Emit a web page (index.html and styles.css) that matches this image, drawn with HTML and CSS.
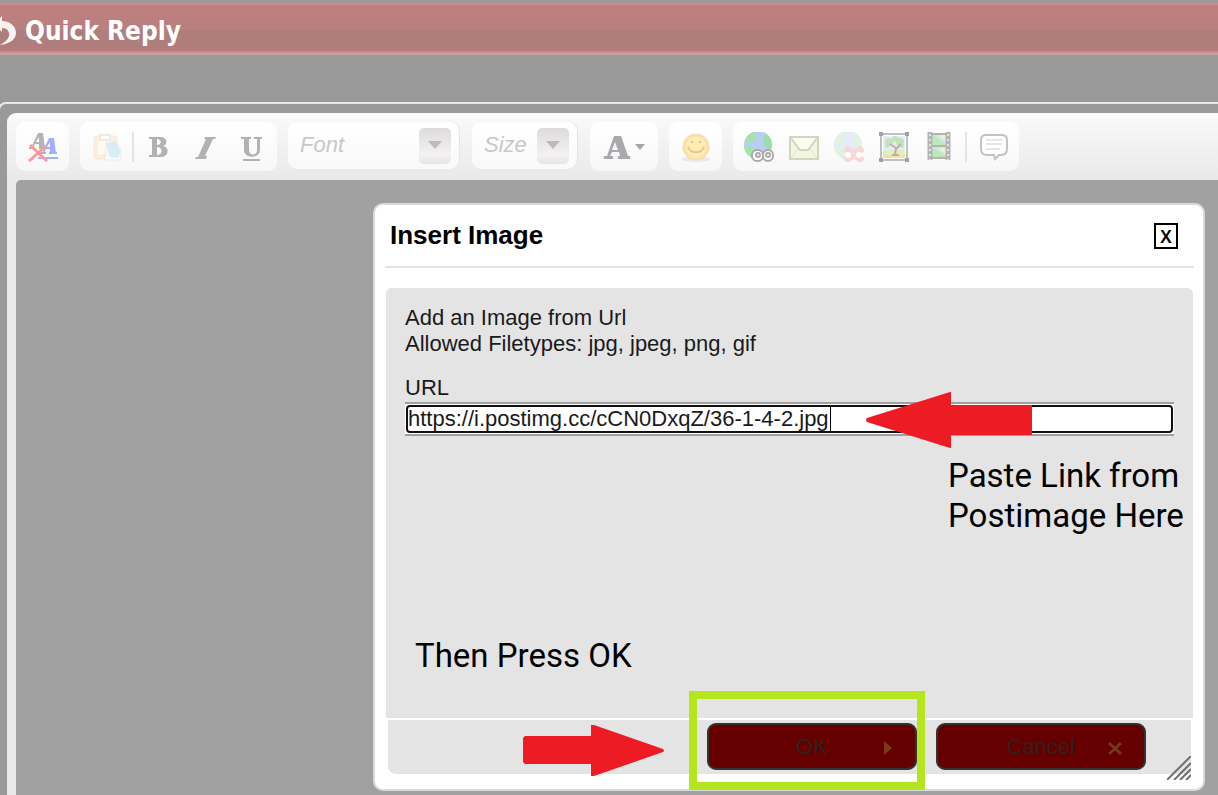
FILE: index.html
```
<!DOCTYPE html>
<html lang="en">
<head>
    <meta charset="UTF-8">
    <meta name="viewport" content="width=device-width, initial-scale=1.0">
    <title>Quick Reply</title>
    <link rel="stylesheet" href="styles.css">
</head>
<body>
    <header class="reply-header">
        <svg class="reply-icon" width="17" height="30" viewBox="0 0 17 30">
            <path d="M0 2 L2 0 V5 C10 5 16 10 16 17 C16 23 10 28 0 29 C7 25 10 21 9 17 C8 13 5 12 2 12 V16 L0 14 Z" fill="#fff" opacity=".9"/>
        </svg>
        <h1>Quick Reply</h1>
    </header>

    <main class="editor-frame">
        <div class="editor">
            <div class="toolbar">
                <div class="group">
                    <button class="tool" aria-label="Remove Format">
                        <svg width="30" height="30" viewBox="0 0 30 30">
                            <g fill="#b4b4b4">
                                <path d="M10 1 H15 L17 17 H11 L11 12 H7 L5 16 H3 Z M11 5 L8 10 H11 Z"/>
                                <path d="M1 15 H7 V17 H1 Z"/>
                            </g>
                            <g fill="#a3aeff">
                                <path d="M21 6 H26 L28 22 H22 L22 17 H18 L16 21 H14 Z M22 10 L19 15 H22 Z"/>
                                <path d="M12 20 H18 V22 H12 Z M21 20 H29 V22 H21 Z M10 25 H30 V27 H10 Z"/>
                            </g>
                            <path d="M2 13 L19 29 M18 14 L1 29" stroke="#ff9a9a" stroke-width="3"/>
                        </svg>
                    </button>
                </div>

                <div class="group">
                    <button class="tool" aria-label="Paste">
                        <svg width="30" height="30" viewBox="0 0 30 30">
                            <rect x="2" y="4" width="23" height="23" rx="3" fill="#fdeedd" stroke="#f8e6d2"/>
                            <path d="M6 9 H19 V22 H6 Z" fill="#fffaf2"/>
                            <path d="M8 3 H18 V8 H8 Z" fill="#fff" stroke="#f1e8de" stroke-width="2"/>
                            <path d="M14 14 L26 13 L29 17 V28 H13 Z" fill="#fafafa" stroke="#ececec"/>
                            <path d="M13 11 L24 9 L29 20 L26 26 L18 25 Z" fill="#d8eef7"/>
                        </svg>
                    </button>
                    <span class="separator"></span>
                    <button class="tool" aria-label="Bold">
                        <svg width="24" height="30" viewBox="0 0 24 30">
                            <path d="M2 5 H13 C21 5 21 13 16 14 C23 15 22 25 14 25 H2 V23 H5 V7 H2 Z M10 7 V13 C15 13 15 7 10 7 Z M10 15 V23 C16 23 16 15 10 15 Z" fill="#b2b2b4" fill-rule="evenodd"/>
                        </svg>
                    </button>
                    <button class="tool" aria-label="Italic">
                        <svg width="24" height="30" viewBox="0 0 24 30">
                            <path d="M12 5 H23 L22 7 H20 L12 24 H14 L13 27 H2 L3 25 H5 L13 7 H11 Z" fill="#b2b2b4"/>
                        </svg>
                    </button>
                    <button class="tool" aria-label="Underline">
                        <svg width="24" height="30" viewBox="0 0 24 30">
                            <path d="M2 5 H12 V7 H10 V18 C10 24 18 24 18 18 V7 H15 V5 H23 V7 H21 V18 C21 27 5 27 5 18 V7 H2 Z M4 27 H21 V29 H4 Z" fill="#b2b2b4"/>
                        </svg>
                    </button>
                </div>

                <div class="combo combo-font">
                    <select aria-label="Font">
                        <option>Font</option>
                    </select>
                    <span class="combo-arrow"></span>
                </div>

                <div class="combo combo-size">
                    <select aria-label="Size">
                        <option>Size</option>
                    </select>
                    <span class="combo-arrow"></span>
                </div>

                <div class="group">
                    <button class="tool tool-color" aria-label="Text Color">
                        <svg width="42" height="30" viewBox="0 0 42 30">
                            <path d="M10 4 H17 L24 24 H26 V27 H14 V24 H16 L15 20 H8 L6 24 H9 V27 H0 V24 H3 Z M11 10 L8 18 H14 Z" fill="#a9a9ad" fill-rule="evenodd"/>
                            <path d="M31 12 H41 L36 18 Z" fill="#a6a6a6"/>
                        </svg>
                    </button>
                </div>

                <div class="group">
                    <button class="tool" aria-label="Smiley">
                        <svg width="30" height="30" viewBox="0 0 30 30">
                            <ellipse cx="15" cy="27" rx="14" ry="3" fill="#e9e9e9"/>
                            <circle cx="15" cy="15" r="12" fill="#fcecb4" stroke="#f9dfae" stroke-width="3"/>
                            <circle cx="11" cy="10" r="1" fill="#dcb58a"/>
                            <circle cx="19" cy="10" r="1" fill="#dcb58a"/>
                            <path d="M7 15 C10 22 20 22 23 15" fill="none" stroke="#e6ca95" stroke-width="2"/>
                        </svg>
                    </button>
                </div>

                <div class="group group-media">
                    <button class="tool" aria-label="Link">
                        <svg width="30" height="30" viewBox="0 0 30 30">
                            <circle cx="14" cy="13" r="14" fill="#b9cdf7"/>
                            <path d="M2 6 C6 0 11 0 14 0 L11 5 L13 8 L7 11 L2 10 Z" fill="#a6e2b0"/>
                            <path d="M21 1 C27 5 29 11 27 18 L20 14 L19 7 Z" fill="#9fdcaa"/>
                            <path d="M0 14 L7 14 L13 19 L8 26 C3 23 0 19 0 14 Z" fill="#a6e2b0"/>
                            <g fill="#fff" stroke="#aaa" stroke-width="2">
                                <rect x="8" y="18" width="11" height="11" rx="5"/>
                                <rect x="19" y="18" width="10" height="11" rx="5"/>
                                <circle cx="14" cy="23" r="2"/>
                                <circle cx="24" cy="23" r="2"/>
                            </g>
                        </svg>
                    </button>
                    <button class="tool" aria-label="Email">
                        <svg width="30" height="30" viewBox="0 0 30 30">
                            <rect x="1" y="5" width="28" height="22" fill="#f3f5e1" stroke="#d2d6c0" stroke-width="2"/>
                            <path d="M2 6 L11 18 H19 L28 6" fill="#fbfcef" stroke="#d2d6c0" stroke-width="2"/>
                            <path d="M2 26 L9 17 M28 26 L21 17" stroke="#dde0cc"/>
                        </svg>
                    </button>
                    <button class="tool" aria-label="Remove Link">
                        <svg width="30" height="30" viewBox="0 0 30 30">
                            <circle cx="14" cy="13" r="14" fill="#e4ecfa"/>
                            <path d="M2 6 C6 0 11 0 14 0 L11 5 L13 8 L7 11 L2 10 Z" fill="#dff3e2"/>
                            <path d="M21 1 C27 5 29 11 27 18 L20 14 L19 7 Z" fill="#dff3e2"/>
                            <path d="M0 14 L7 14 L13 19 L8 26 C3 23 0 19 0 14 Z" fill="#dff3e2"/>
                            <path d="M11 16 L29 29 M29 16 L11 29" stroke="#fcd6d6" stroke-width="7"/>
                            <circle cx="14" cy="23" r="3" fill="#fff"/>
                            <circle cx="25" cy="23" r="3" fill="#fff"/>
                        </svg>
                    </button>
                    <button class="tool" aria-label="Insert Image">
                        <svg width="30" height="30" viewBox="0 0 30 30">
                            <rect x="2" y="2" width="26" height="26" fill="#fff" stroke="#c0c0c0" stroke-width="2"/>
                            <rect x="4" y="4" width="22" height="14" fill="#e0eefb"/>
                            <path d="M4 18 H26 V23 H4 Z" fill="#dff0c0"/>
                            <path d="M4 23 H26 V26 H4 Z" fill="#f6dfa4"/>
                            <g fill="#c6e3b8">
                                <circle cx="10" cy="10" r="4"/>
                                <circle cx="16" cy="7" r="3"/>
                                <circle cx="21" cy="10" r="4"/>
                                <circle cx="8" cy="14" r="2"/>
                                <circle cx="23" cy="14" r="2"/>
                            </g>
                            <path d="M16 23 L17 16 L11 12 M17 17 L22 12 M13 23 H20" fill="none" stroke="#c4aea4" stroke-width="2"/>
                            <path d="M0 0 H4 V4 H0 Z M26 0 H30 V4 H26 Z M0 26 H4 V30 H0 Z M26 26 H30 V30 H26 Z" fill="#a0a0a0"/>
                        </svg>
                    </button>
                    <button class="tool" aria-label="Insert Video">
                        <svg width="24" height="30" viewBox="0 0 24 30">
                            <rect x="1" y="1" width="22" height="26" fill="#c0eafa"/>
                            <path d="M5 3 C10 4 13 10 19 12 V13 H5 Z M5 16 C11 17 13 22 19 24 V26 H5 Z" fill="#bce9b5"/>
                            <path d="M12 3 H19 V8 C16 8 13 6 12 3 Z M12 16 H19 V21 C16 21 13 19 12 16 Z" fill="#f6efb2"/>
                            <path d="M5 2 H19 M5 14 H19 M5 26 H19" stroke="#b4b4b4" stroke-width="2"/>
                            <path d="M3 0 V28 M21 0 V28" stroke="#b4b4b4" stroke-width="5"/>
                            <path d="M3 2 V28 M21 2 V28" stroke="#e4e4e4" stroke-width="2" stroke-dasharray="2 3"/>
                        </svg>
                    </button>
                    <span class="separator"></span>
                    <button class="tool" aria-label="Quote">
                        <svg width="30" height="30" viewBox="0 0 30 30">
                            <path d="M7 3 H23 Q28 3 28 8 V17 Q28 23 22 23 H20 L16 27 L15 23 H8 Q2 23 2 17 V8 Q2 3 7 3 Z" fill="#fff" stroke="#c2c2c2" stroke-width="2"/>
                            <path d="M7 8 H23 M7 12 H23 M7 17 H21" stroke="#e6e6e6" stroke-width="2"/>
                        </svg>
                    </button>
                </div>
            </div>
            <div class="editor-body"></div>
        </div>
    </main>

    <section class="dialog" role="dialog" aria-labelledby="dialogTitle">
        <div class="dialog-title">
            <h2 id="dialogTitle">Insert Image</h2>
            <button class="close-button">X</button>
        </div>
        <div class="dialog-body">
            <p>Add an Image from Url<br>Allowed Filetypes: jpg, jpeg, png, gif</p>
            <label for="urlInput">URL</label>
            <div class="url-field">
                <input type="text" id="urlInput" value="https://i.postimg.cc/cCN0DxqZ/36-1-4-2.jpg">
                <span class="caret"></span>
            </div>
        </div>
        <div class="dialog-footer">
            <button class="action">OK
                <svg width="10" height="16" viewBox="0 0 10 16"><path d="M1 1 L9 8 L1 15 Z" fill="#7a3a1c"/></svg>
            </button>
            <button class="action">Cancel
                <svg width="14" height="16" viewBox="0 0 14 16"><path d="M1 3 L13 14 M13 3 L1 14" stroke="#6f3a1e" stroke-width="3"/></svg>
            </button>
        </div>
        <svg class="resizer" width="24" height="24" viewBox="0 0 24 24">
            <path d="M0 24 L24 0 M7 24 L24 7 M13 24 L24 13 M19 24 L24 19" stroke="#707070" stroke-width="2"/>
        </svg>

        <!-- Instructions drawn over the dialog -->
        <svg class="arrow arrow-url" width="166" height="56" viewBox="0 0 166 56">
            <path d="M1 26 L84 0 H85 V13 H166 V43 H85 V56 H84 L1 30 Q-1 28 1 26 Z" fill="#ed1c24"/>
        </svg>
        <p class="note note-url">Paste Link from<br>Postimage Here</p>
        <p class="note note-ok">Then Press OK</p>
        <svg class="arrow arrow-ok" width="141" height="51" viewBox="0 0 141 51">
            <path d="M2 11 H68 V0 H71 L140 24 Q142 26 140 27 L71 51 H68 V39 H2 L0 37 V13 Z" fill="#ed1c24"/>
        </svg>
        <div class="highlight"></div>
    </section>
</body>
</html>
```
FILE: styles.css
```
* {
    box-sizing: border-box;
}
body {
    font-family: 'Liberation Sans', Arial, sans-serif;
    font-size: 22px;
    line-height: 26px;
    background-color: #999;
    color: #1a1a1a;
    margin: 0;
    padding-top: 3px;
    display: flex;
    flex-direction: column;
    height: 100vh;
    overflow: hidden;
    position: relative;
}
h1, h2, p {
    margin: 0;
}
button, input, select {
    font: inherit;
    color: inherit;
}

/* Quick reply bar */
.reply-header {
    display: flex;
    align-items: center;
    gap: 8px;
    height: 50px;
    padding-top: 5px;
    flex-shrink: 0;
    background: linear-gradient(#bd7f7e, #b8807f 54%, #af7d7c 55%, #b07d7c);
    border-top: 2px solid #da8586;
    border-bottom: 2px solid #da8586;
    box-shadow: 0 2px 0 #b3abab;
}
.reply-header h1 {
    font-family: 'DejaVu Sans Condensed', 'Noto Sans', sans-serif;
    font-size: 26px;
    font-weight: bold;
    line-height: 30px;
    color: #fff;
}

/* Editor */
.editor-frame {
    flex: 1;
    display: flex;
    margin: 49px 0 0 -2px;
    padding: 9px 0 0 7px;
    border: 2px solid #e8e8e8;
    border-width: 2px 0 0 2px;
    border-radius: 8px 0 0 0;
}
.editor {
    flex: 1;
    display: flex;
    flex-direction: column;
    padding-left: 9px;
    border-radius: 9px 0 0 0;
    background: linear-gradient(#fafafa, #e9e9e9 67px);
}
.toolbar {
    display: flex;
    align-items: flex-start;
    gap: 11px;
    padding: 9px 0;
}
.editor-body {
    flex: 1;
    background-color: #a1a1a1;
    border-radius: 5px 0 0 0;
}
.group {
    display: flex;
    align-items: center;
    height: 49px;
    padding: 0 3px 0 4px;
    border-radius: 9px;
    background: linear-gradient(#fff, #f7f7f7);
}
.tool {
    display: flex;
    align-items: center;
    justify-content: center;
    width: 46px;
    height: 46px;
    padding: 0;
    border: none;
    background: none;
    cursor: pointer;
}
.tool-color {
    width: 61px;
}
.group-media {
    padding: 0 3px;
}
.group-media .tool {
    width: 45px;
}
.separator {
    width: 2px;
    height: 30px;
    margin: 0 2px;
    background-color: #e4e4e4;
}
.group-media .separator {
    margin: 0 4px;
}
.combo {
    position: relative;
    height: 47px;
    margin-right: 2px;
    border-radius: 9px;
    background: linear-gradient(#fff, #f9f9f9);
    box-shadow: 1px 0 1px #e2e2e2;
}
.combo-font {
    width: 171px;
}
.combo-size {
    width: 105px;
}
.combo select {
    appearance: none;
    width: 100%;
    height: 46px;
    padding: 0 12px;
    border: none;
    background: none;
    font-style: italic;
    color: #c8c8c8;
}
.combo-arrow {
    position: absolute;
    top: 6px;
    right: 8px;
    width: 32px;
    height: 36px;
    border-radius: 5px;
    background: linear-gradient(#dedbdb, #f3f1f1 75%, #e6e4e4);
    pointer-events: none;
}
.combo-arrow::after {
    content: "";
    position: absolute;
    top: 13px;
    left: 9px;
    border: 7px solid transparent;
    border-top: 8px solid #bcbaba;
    border-bottom: none;
}

/* Insert image dialog */
.dialog {
    position: absolute;
    top: 203px;
    left: 373px;
    right: 13px;
    padding-bottom: 15px;
    background-color: #fff;
    border: 2px solid #dadada;
    border-radius: 10px;
}
.dialog-title {
    display: flex;
    justify-content: space-between;
    align-items: center;
    margin: 0 9px 20px 10px;
    padding: 0 16px 0 5px;
    height: 63px;
    border-bottom: 2px solid #e4e4e4;
}
.dialog-title h2 {
    font-size: 26px;
    line-height: 28px;
    padding-bottom: 2px;
    color: #000;
}
.close-button {
    width: 24px;
    height: 26px;
    padding: 0;
    border: 2px solid #000;
    background: #fff;
    font-family: 'Noto Sans', sans-serif;
    font-size: 18px;
    font-weight: 600;
    line-height: 20px;
    color: #000;
}
.dialog-body {
    min-height: 430px;
    margin: 0 10px 2px 11px;
    padding: 17px 19px;
    background-color: #e4e4e4;
    border-radius: 6px 6px 0 0;
}
.dialog-body label {
    display: block;
    margin: 18px 0 1px;
}
.url-field {
    position: relative;
    padding: 1px;
    background-color: #fff;
    border: 2px solid #a0a0a0;
    border-width: 2px 0;
}
.url-field input {
    display: block;
    width: 100%;
    height: 28px;
    padding: 0;
    border: 2px solid #101010;
    border-radius: 4px;
    background: #fff;
    outline: none;
}
.caret {
    position: absolute;
    top: 3px;
    left: 425px;
    width: 1px;
    height: 24px;
    background-color: #000;
}
.dialog-footer {
    display: flex;
    justify-content: flex-end;
    gap: 19px;
    margin: 0 12px 0 13px;
    padding: 3px 45px 4px 0;
    background-color: #e4e4e4;
    border-radius: 0 0 0 8px;
}
.action {
    position: relative;
    width: 210px;
    height: 47px;
    border: 2px solid #333;
    border-radius: 9px;
    background-color: #600;
    color: #2c2222;
    cursor: pointer;
}
.action svg {
    position: absolute;
    top: 15px;
    right: 22px;
}
.resizer {
    position: absolute;
    right: 12px;
    bottom: 9px;
}

/* Instructions */
.arrow, .note, .highlight {
    position: absolute;
    pointer-events: none;
}
.note {
    font-family: Roboto, sans-serif;
    font-size: 33px;
    line-height: 40px;
    color: #000;
    white-space: nowrap;
}
.arrow-url {
    top: 187px;
    left: 491px;
}
.note-url {
    top: 251px;
    left: 573px;
}
.note-ok {
    top: 431px;
    left: 40px;
}
.arrow-ok {
    top: 520px;
    left: 148px;
}
.highlight {
    top: 486px;
    left: 314px;
    width: 236px;
    height: 99px;
    border: 8px solid #b5e61d;
}
```
